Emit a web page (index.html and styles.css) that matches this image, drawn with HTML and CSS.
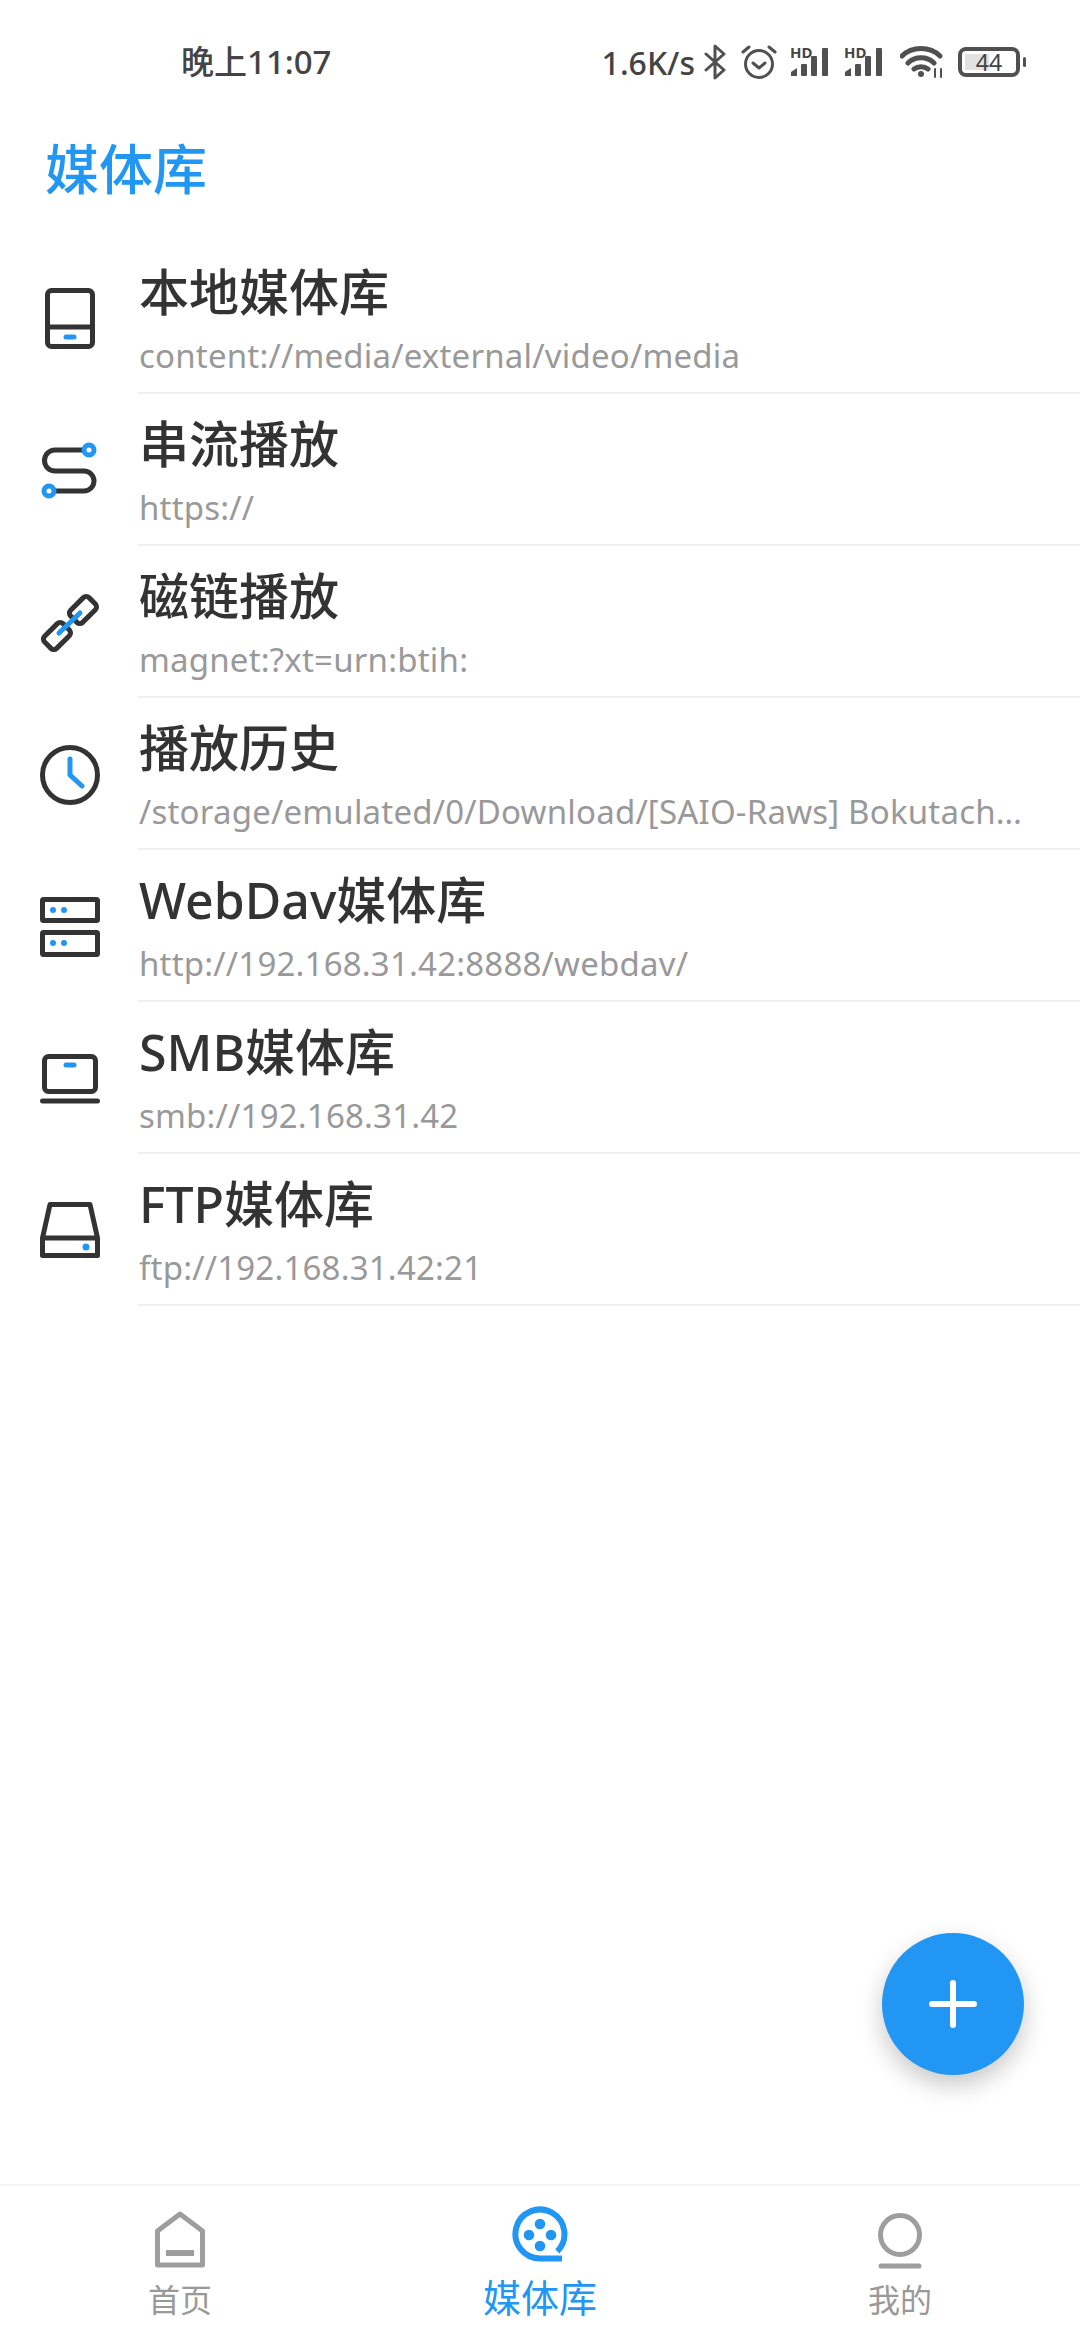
FILE: index.html
```html
<!DOCTYPE html>
<html lang="zh-CN">

<head>
    <meta charset="UTF-8">
    <meta name="viewport" content="width=device-width, initial-scale=1.0">
    <link rel="stylesheet" href="styles.css">
    <title>媒体库</title>
</head>

<body>

    <div class="app">
        <!-- status bar -->
        <div class="status-bar">
            <span class="time">晚上11:07</span>
            <div class="status-icons">
                <span class="speed">1.6K/s</span>
                <svg class="s-bt" width="22" height="36" viewBox="0 0 22 36">
                    <path class="line-grey thin" d="M2 10 L20 26 L11 34 V2 L20 10 L2 26" />
                </svg>
                <svg class="s-alarm" width="36" height="34" viewBox="0 0 36 34">
                    <circle class="line-grey thin" cx="18" cy="19" r="13.5" />
                    <path class="line-grey thin" d="M12 18 L18 23 L24 18 M2 7 L8 2 M34 7 L28 2" />
                </svg>
                <div class="signal">
                    <span class="hd">HD</span>
                    <svg width="42" height="30" viewBox="0 0 42 30">
                        <path class="bar" d="M1 29 V25 L7 21 V29 Z" />
                        <rect class="bar" x="11" y="17" width="6" height="12" rx="1" />
                        <rect class="bar" x="21" y="9" width="6" height="20" rx="1" />
                        <rect class="bar" x="32" y="1" width="6" height="28" rx="1" />
                    </svg>
                </div>
                <div class="signal second">
                    <span class="hd">HD</span>
                    <svg width="42" height="30" viewBox="0 0 42 30">
                        <path class="bar" d="M1 29 V25 L7 21 V29 Z" />
                        <rect class="bar" x="11" y="17" width="6" height="12" rx="1" />
                        <rect class="bar" x="21" y="9" width="6" height="20" rx="1" />
                        <rect class="bar" x="32" y="1" width="6" height="28" rx="1" />
                    </svg>
                </div>
                <svg class="s-wifi" width="44" height="32" viewBox="0 0 44 32">
                    <path class="line-grey wifi" d="M2 10 C12 0 30 0 40 10 M8 17 C15 10 27 10 34 17 M14 23 C18 20 24 20 28 23" />
                    <circle class="bar" cx="21" cy="28" r="3" />
                    <path class="line-grey hair" d="M35 23 V31 M41 23 V31" />
                </svg>
                <div class="battery">
                    <span class="battery-fill"></span>
                    <span class="battery-num">44</span>
                </div>
                <span class="battery-nub"></span>
            </div>
        </div>

        <h1 class="page-title">媒体库</h1>

        <div class="list">
            <div class="row">
                <svg class="row-icon" width="70" height="70" viewBox="0 0 70 70">
                    <rect class="dark" x="12.5" y="7.5" width="45" height="56" rx="4" />
                    <path class="dark" d="M12.5 44 H57.5" />
                    <path class="blue" d="M31 54 H39" />
                </svg>
                <div class="row-text">
                    <div class="row-title">本地媒体库</div>
                    <div class="row-sub">content://media/external/video/media</div>
                </div>
            </div>
            <div class="row">
                <svg class="row-icon" width="70" height="70" viewBox="0 0 70 70">
                    <path class="dark" d="M49 15 H20 A10.5 10.5 0 0 0 20 36 H49 A10 10 0 0 1 49 56 H20" />
                    <circle class="blue dot-ring" cx="54" cy="15" r="5" />
                    <circle class="blue dot-ring" cx="14" cy="56" r="5" />
                </svg>
                <div class="row-text">
                    <div class="row-title">串流播放</div>
                    <div class="row-sub">https://</div>
                </div>
            </div>
            <div class="row">
                <svg class="row-icon" width="70" height="70" viewBox="0 0 70 70">
                    <rect class="dark" x="35" y="14.5" width="26" height="17" rx="4" transform="rotate(-45 48 23)" />
                    <rect class="dark" x="9" y="40.5" width="26" height="17" rx="4" transform="rotate(-45 22 49)" />
                    <path class="blue" d="M24 46 L45 26" />
                </svg>
                <div class="row-text">
                    <div class="row-title">磁链播放</div>
                    <div class="row-sub">magnet:?xt=urn:btih:</div>
                </div>
            </div>
            <div class="row">
                <svg class="row-icon" width="70" height="70" viewBox="0 0 70 70">
                    <circle class="dark" cx="35" cy="36" r="27.5" />
                    <path class="blue" d="M35 20 V36 L47 47" />
                </svg>
                <div class="row-text">
                    <div class="row-title">播放历史</div>
                    <div class="row-sub">/storage/emulated/0/Download/[SAIO-Raws] Bokutach…</div>
                </div>
            </div>
            <div class="row">
                <svg class="row-icon" width="70" height="70" viewBox="0 0 70 70">
                    <rect class="dark" x="7.5" y="8.5" width="55" height="21" rx="1" />
                    <rect class="dark" x="7.5" y="41.5" width="55" height="22" rx="1" />
                    <circle class="blue-fill" cx="18" cy="19" r="3" />
                    <circle class="blue-fill" cx="29" cy="19" r="3" />
                    <circle class="blue-fill" cx="18" cy="52" r="3" />
                    <circle class="blue-fill" cx="29" cy="52" r="3" />
                </svg>
                <div class="row-text">
                    <div class="row-title">WebDav媒体库</div>
                    <div class="row-sub">http://192.168.31.42:8888/webdav/</div>
                </div>
            </div>
            <div class="row">
                <svg class="row-icon" width="70" height="70" viewBox="0 0 70 70">
                    <rect class="dark" x="9.5" y="13.5" width="51" height="35" rx="4" />
                    <path class="dark" d="M7.5 58 H62.5" />
                    <path class="blue" d="M31 22 H39" />
                </svg>
                <div class="row-text">
                    <div class="row-title">SMB媒体库</div>
                    <div class="row-sub">smb://192.168.31.42</div>
                </div>
            </div>
            <div class="row">
                <svg class="row-icon" width="70" height="70" viewBox="0 0 70 70">
                    <path class="dark" d="M7.5 43 L15 9.5 H55 L62.5 43 V60.5 H7.5 Z M7.5 43 H62.5" />
                    <circle class="blue-fill" cx="51" cy="52" r="3.5" />
                </svg>
                <div class="row-text">
                    <div class="row-title">FTP媒体库</div>
                    <div class="row-sub">ftp://192.168.31.42:21</div>
                </div>
            </div>
        </div>

        <div class="nav">
            <div class="nav-item">
                <svg width="60" height="64" viewBox="0 0 60 64">
                    <path class="grey" d="M7.5 25 L30 8 L52.5 25 V59 H7.5 Z" />
                    <path class="grey thick" d="M16 47 H44" />
                </svg>
                <span class="nav-label">首页</span>
            </div>
            <div class="nav-item active">
                <svg width="60" height="64" viewBox="0 0 60 64">
                    <path class="blue reel" d="M47.3 45.3 A24.5 24.5 0 1 0 30 52.5 H52" />
                    <circle class="blue-fill" cx="30" cy="18" r="5.3" />
                    <circle class="blue-fill" cx="30" cy="40" r="5.3" />
                    <circle class="blue-fill" cx="19" cy="29" r="5.3" />
                    <circle class="blue-fill" cx="41" cy="29" r="5.3" />
                </svg>
                <span class="nav-label">媒体库</span>
            </div>
            <div class="nav-item">
                <svg width="60" height="64" viewBox="0 0 60 64">
                    <circle class="grey" cx="30" cy="29" r="19.5" />
                    <path class="grey" d="M11 60 H49" />
                </svg>
                <span class="nav-label">我的</span>
            </div>
        </div>

        <button class="fab" type="button">
            <svg width="48" height="48" viewBox="0 0 48 48">
                <path class="plus" d="M3 24 H45 M24 3 V45" />
            </svg>
        </button>
    </div>

</body>

</html>
```
FILE: styles.css
```css
* {
    box-sizing: border-box;
}

body {
    margin: 0;
    background: #fff;
    font-family: "Noto Sans", "Noto Sans CJK SC", sans-serif;
}

svg {
    display: block;
    flex-shrink: 0;
}

svg path,
svg rect,
svg circle {
    fill: none;
    stroke-linecap: round;
    stroke-linejoin: round;
}

.app {
    position: relative;
    width: 1080px;
    height: 2340px;
    display: flex;
    flex-direction: column;
    overflow: hidden;
}

/* status bar */
.status-bar {
    height: 124px;
    padding: 40px 54px 0 181px;
    display: flex;
    justify-content: space-between;
    align-items: flex-start;
    color: #444;
}

.time {
    font-size: 33px;
    line-height: 44px;
    font-weight: 500;
}

.status-icons {
    display: flex;
    align-items: center;
    height: 44px;
}

.speed {
    font-size: 32px;
    font-weight: 500;
    margin-right: 9px;
}

.s-alarm {
    margin-left: 15px;
}

.signal {
    position: relative;
    margin-left: 13px;
}

.signal.second {
    margin-left: 12px;
}

.hd {
    position: absolute;
    left: 0;
    top: -2px;
    font-size: 15px;
    line-height: 14px;
    font-weight: 700;
}

svg .bar {
    fill: #505050;
}

.line-grey {
    stroke: #505050;
}

.thin {
    stroke-width: 3;
}

.wifi {
    stroke-width: 5;
}

.hair {
    stroke-width: 2;
}

.s-wifi {
    margin-left: 14px;
}

.battery {
    position: relative;
    width: 62px;
    height: 30px;
    margin-left: 14px;
    border: 4px solid #505050;
    border-radius: 8px;
    text-align: center;
}

.battery-fill {
    position: absolute;
    left: 3px;
    top: 3px;
    bottom: 3px;
    width: 24px;
    background: #e2e2e2;
}

.battery-num {
    position: relative;
    display: block;
    font-size: 23px;
    line-height: 23px;
}

.battery-nub {
    width: 3px;
    height: 10px;
    margin-left: 3px;
    background: #505050;
    border-radius: 2px;
}

/* title */
.page-title {
    margin: 0;
    height: 118px;
    padding: 17px 0 0 45px;
    font-size: 54px;
    line-height: 56px;
    font-weight: 500;
    color: #2196f3;
}

/* list */
.list {
    flex: 1;
}

.row {
    height: 152px;
    display: flex;
    align-items: center;
}

.row-icon {
    margin: 0 33px 0 35px;
}

.row-text {
    flex: 1;
    min-width: 0;
    height: 100%;
    padding: 19px 30px 0 1px;
    border-bottom: 2px solid #f0f0f0;
}

.row-title {
    font-size: 50px;
    line-height: 62px;
    font-weight: 500;
    color: #333;
}

.row-sub {
    margin-top: 10px;
    font-size: 33px;
    line-height: 46px;
    letter-spacing: 0.2px;
    color: #999;
    white-space: nowrap;
}

.dark {
    stroke: #333;
    stroke-width: 5;
}

.blue {
    stroke: #2196f3;
    stroke-width: 5;
}

svg .blue-fill {
    fill: #2196f3;
}

svg .dot-ring {
    fill: #fff;
}

.grey {
    stroke: #9e9e9e;
    stroke-width: 5;
}

.thick {
    stroke-width: 6;
    stroke-linecap: butt;
}

.reel {
    stroke-width: 6;
    stroke-linecap: butt;
}

/* bottom nav */
.nav {
    height: 156px;
    display: flex;
    border-top: 2px solid #f5f5f5;
}

.nav-item {
    flex: 1;
    display: flex;
    flex-direction: column;
    align-items: center;
    padding-top: 20px;
    color: #999;
}

.nav-label {
    margin-top: 10px;
    font-size: 32px;
    line-height: 40px;
}

.nav-item.active {
    color: #2196f3;
}

.nav-item.active .nav-label {
    margin-top: 5px;
    font-size: 38px;
    line-height: 44px;
}

/* add button */
.fab {
    position: absolute;
    left: 882px;
    top: 1933px;
    width: 142px;
    height: 142px;
    padding: 0;
    display: flex;
    align-items: center;
    justify-content: center;
    border: 0;
    border-radius: 50%;
    background: #2196f3;
    box-shadow: 0 10px 24px rgba(0, 0, 0, 0.22);
}

.plus {
    stroke: #fff;
    stroke-width: 6;
}
```
